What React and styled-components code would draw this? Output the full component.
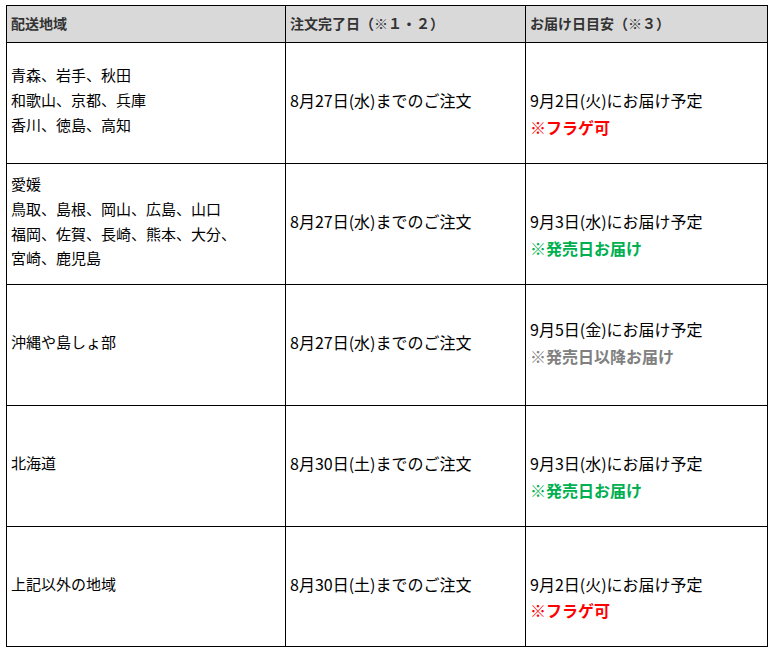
import React from 'react';
import styled, { createGlobalStyle } from 'styled-components';

const GlobalStyle = createGlobalStyle`
  html, body {
    margin: 0;
    padding: 0;
    background: #fff;
  }
  body {
    font-family: "Noto Sans CJK JP", "Noto Sans", sans-serif;
    color: #000;
  }
`;

const Table = styled.table`
  margin: 5px 0 0 6px;
  width: 761px;
  table-layout: fixed;
  border-collapse: collapse;
`;

const Row = styled.tr`
  height: ${(p) => p.$height}px;
`;

const HeadCell = styled.th`
  padding: 0 4px 3px;
  background: #d9d9d9;
  border: 1px solid #000;
  color: #333;
  font-size: 14px;
  font-weight: bold;
  text-align: left;
  vertical-align: middle;
  white-space: nowrap;
`;

const Cell = styled.td`
  padding: ${(p) => (p.$shift ? '26px 4px 5px' : '0 4px 5px')};
  border: 1px solid #000;
  font-size: ${(p) => (p.$small ? 15 : 16)}px;
  line-height: 1.65;
  vertical-align: middle;
  text-align: left;
`;

const Line = styled.div`
  white-space: nowrap;
`;

const toneColors = {
  red: '#ff0000',
  green: '#00b050',
  grey: '#808080',
};

const Note = styled.div`
  font-weight: bold;
  color: ${(p) => toneColors[p.$tone]};
`;

const rows = [
  {
    area: ['青森、岩手、秋田', '和歌山、京都、兵庫', '香川、徳島、高知'],
    order: '8月27日(水)までのご注文',
    arrive: '9月2日(火)にお届け予定',
    note: '※フラゲ可',
    tone: 'red',
  },
  {
    area: ['愛媛', '鳥取、島根、岡山、広島、山口', '福岡、佐賀、長崎、熊本、大分、', '宮崎、鹿児島'],
    order: '8月27日(水)までのご注文',
    arrive: '9月3日(水)にお届け予定',
    note: '※発売日お届け',
    tone: 'green',
  },
  {
    area: ['沖縄や島しょ部'],
    order: '8月27日(水)までのご注文',
    arrive: '9月5日(金)にお届け予定',
    note: '※発売日以降お届け',
    tone: 'grey',
    centered: true,
  },
  {
    area: ['北海道'],
    order: '8月30日(土)までのご注文',
    arrive: '9月3日(水)にお届け予定',
    note: '※発売日お届け',
    tone: 'green',
  },
  {
    area: ['上記以外の地域'],
    order: '8月30日(土)までのご注文',
    arrive: '9月2日(火)にお届け予定',
    note: '※フラゲ可',
    tone: 'red',
    last: true,
  },
];

const App = () => {
  return (
    <>
      <GlobalStyle />
      <Table>
        <colgroup>
          <col style={{ width: 279 }} />
          <col style={{ width: 240 }} />
          <col style={{ width: 242 }} />
        </colgroup>
        <thead>
          <Row $height={37}>
            <HeadCell>配送地域</HeadCell>
            <HeadCell>注文完了日（※１・２）</HeadCell>
            <HeadCell>お届け日目安（※３）</HeadCell>
          </Row>
        </thead>
        <tbody>
          {rows.map((row, i) => (
            <Row key={i} $height={row.last ? 120 : 121}>
              <Cell $small>
                {row.area.map((a) => (
                  <Line key={a}>{a}</Line>
                ))}
              </Cell>
              <Cell>
                <Line>{row.order}</Line>
              </Cell>
              <Cell $shift={!row.centered}>
                <Line>{row.arrive}</Line>
                <Note $tone={row.tone}>{row.note}</Note>
              </Cell>
            </Row>
          ))}
        </tbody>
      </Table>
    </>
  );
};

export default App;
